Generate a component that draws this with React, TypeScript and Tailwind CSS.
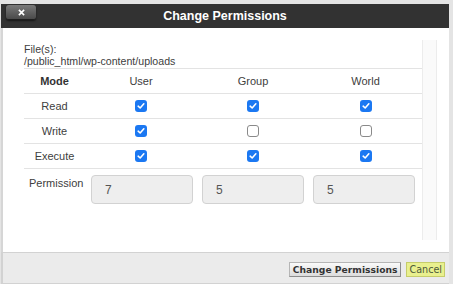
import { Fragment } from "react";

type Perm = { mode: string; user: boolean; group: boolean; world: boolean };

const rows: Perm[] = [
  { mode: "Read", user: true, group: true, world: true },
  { mode: "Write", user: true, group: false, world: false },
  { mode: "Execute", user: true, group: true, world: true },
];

function Box({ checked }: { checked: boolean }) {
  if (!checked) {
    return (
      <span className="block h-[12px] w-[12px] rounded-[3px] border border-[#8a8a8a] bg-white" />
    );
  }
  return (
    <span className="grid h-[12px] w-[12px] place-items-center rounded-[3px] bg-[#1b78f2]">
      <svg viewBox="0 0 12 12" className="h-[10px] w-[10px]">
        <path
          d="M2.6 6.2 L5 8.4 L9.4 3.4"
          fill="none"
          stroke="white"
          strokeWidth="1.9"
          strokeLinecap="round"
          strokeLinejoin="round"
        />
      </svg>
    </span>
  );
}

export default function App() {
  return (
    <div
      className="flex h-[284px] w-[453px] flex-col bg-[#e4e4e4] pl-[1px] pr-[4px] pt-[4px]"
      style={{ fontFamily: '"Liberation Sans", Arial, sans-serif' }}
    >
      {/* title bar */}
      <header className="grid h-[24px] grid-cols-[1fr_auto_1fr] items-start bg-[#323232]">
        <div className="pl-[5px] pt-[1px]">
          <button className="grid h-[15px] w-[30px] place-items-center rounded-[3px] border-b border-[#1e1e1e] bg-gradient-to-b from-[#7a7a7a] to-[#4a4a4a] shadow-[0_1px_2px_rgba(0,0,0,0.6)]">
            <svg viewBox="0 0 8 8" className="h-[7px] w-[7px]">
              <path d="M1 1 L7 7 M7 1 L1 7" stroke="white" strokeWidth="1.8" />
            </svg>
          </button>
        </div>
        <h1 className="pt-[4px] text-[12.5px] font-bold leading-[16px] text-white">
          Change Permissions
        </h1>
        <div />
      </header>

      {/* body */}
      <div className="flex h-[224px] border-l-2 border-[#d6d6d6] bg-white">
        <div className="w-[419px] pl-[21px] pt-[15px] text-[#404040]">
          <p className="text-[10.6px] leading-[12px]">File(s):</p>
          <p className="text-[10.6px] leading-[12px]">/public_html/wp-content/uploads</p>

          <div className="mt-[1px] grid w-[398px] grid-cols-[61px_112px_112px_113px] border-b border-[#e3e3e3] text-[11px]">
            <div className="flex h-[25px] items-center justify-center border-t border-[#e3e3e3] font-bold text-[#333]">
              Mode
            </div>
            {["User", "Group", "World"].map((h) => (
              <div
                key={h}
                className="flex h-[25px] items-center justify-center border-t border-[#e3e3e3]"
              >
                {h}
              </div>
            ))}
            {rows.map((r) => (
              <Fragment key={r.mode}>
                <div className="flex h-[25px] items-center justify-center border-t border-[#e3e3e3]">
                  {r.mode}
                </div>
                {[r.user, r.group, r.world].map((c, i) => (
                  <div
                    key={i}
                    className="flex h-[25px] items-center justify-center border-t border-[#e3e3e3]"
                  >
                    <Box checked={c} />
                  </div>
                ))}
              </Fragment>
            ))}
          </div>

          <div className="mt-[6px] flex items-start">
            <span className="w-[67px] pl-[5px] pt-[2px] text-[11px] leading-[13px]">
              Permission
            </span>
            <div className="flex gap-[9px]">
              {["7", "5", "5"].map((v, i) => (
                <div
                  key={i}
                  className="flex h-[29px] w-[102px] items-center rounded-[4px] border border-[#d2d2d2] bg-[#eeeeee] pl-[13px] text-[12px] text-[#555]"
                >
                  {v}
                </div>
              ))}
            </div>
          </div>
        </div>

        <div className="mb-[12px] mt-[12px] w-[15px] border-l border-r border-[#ececec] bg-[#fafafa]" />
      </div>

      {/* footer */}
      <footer className="flex h-[32px] items-start justify-end gap-[5px] border-b border-l-2 border-t border-[#d2d2d2] bg-[#ebebeb] pr-[4px] pt-[9px]">
        <button
          className="h-[15px] border border-[#b5b5b5] border-b-[#8c8c8c] border-r-[#8c8c8c] bg-gradient-to-b from-[#fafafa] to-[#dcdcdc] px-[3px] text-[9.2px] font-bold leading-[13px] text-[#333]"
          style={{ fontFamily: '"DejaVu Sans", Verdana, sans-serif' }}
        >
          Change Permissions
        </button>
        <button
          className="h-[15px] border border-[#c6cd6a] bg-[#e9f08e] px-[2px] text-[9.6px] leading-[13px] text-[#4d5a3a]"
          style={{ fontFamily: '"DejaVu Sans", Verdana, sans-serif' }}
        >
          Cancel
        </button>
      </footer>
    </div>
  );
}
